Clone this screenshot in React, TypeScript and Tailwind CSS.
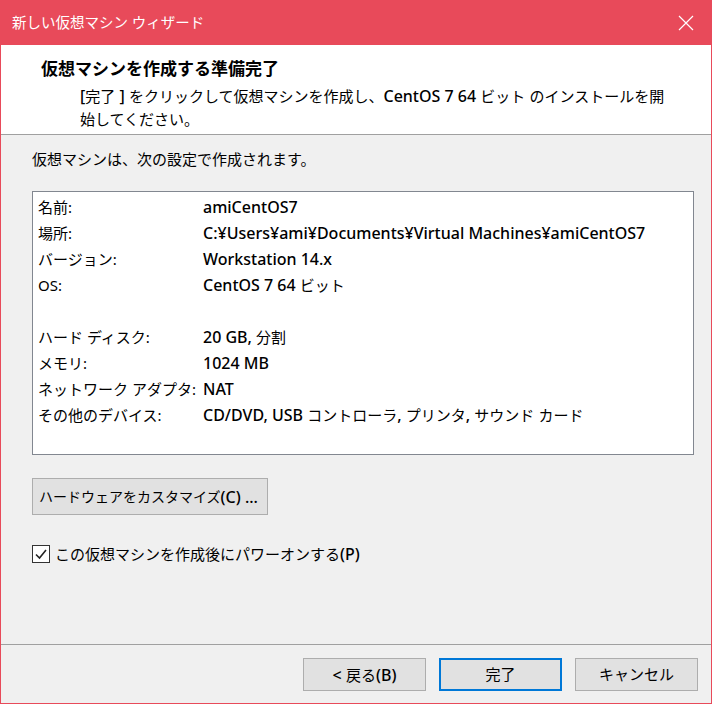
import React from "react";

const rows: [string, string][] = [
  ["名前:", "amiCentOS7"],
  ["場所:", "C:¥Users¥ami¥Documents¥Virtual Machines¥amiCentOS7"],
  ["バージョン:", "Workstation 14.x"],
  ["OS:", "CentOS 7 64 ビット"],
  ["", ""],
  ["ハード ディスク:", "20 GB, 分割"],
  ["メモリ:", "1024 MB"],
  ["ネットワーク アダプタ:", "NAT"],
  ["その他のデバイス:", "CD/DVD, USB コントローラ, プリンタ, サウンド カード"],
];

function M({ text }: { text: string }) {
  const parts = text.split(/([\u3000-\u30ff\u4e00-\u9fff\uff00-\uffef]+)/);
  return (
    <>
      {parts.map((p, i) =>
        p === "" ? null : /[\u3000-\u30ff\u4e00-\u9fff\uff00-\uffef]/.test(p) ? (
          <span key={i}>{p}</span>
        ) : (
          <span key={i} className="text-[16px] font-medium">
            {p}
          </span>
        )
      )}
    </>
  );
}

export default function App() {
  return (
    <div
      className="w-[712px] h-[704px] border border-[#e84a5a] bg-[#f0f0f0] flex flex-col text-black"
      style={{ fontFamily: '"Noto Sans", "Noto Sans CJK JP", sans-serif' }}
    >
      {/* Title bar */}
      <div className="h-[44px] bg-[#e84a5a] flex items-center justify-between pl-[11px] pr-[17px] shrink-0">
        <span className="text-white text-[14.5px]">新しい仮想マシン ウィザード</span>
        <svg width="16" height="16" viewBox="0 0 16 16">
          <path d="M1 1 L15 15 M15 1 L1 15" stroke="white" strokeWidth="1.2" fill="none" />
        </svg>
      </div>

      {/* Header */}
      <div className="h-[90px] bg-white border-b border-[#a0a0a0] shrink-0 pl-[40px] pt-[12px]">
        <div className="text-[17px] font-bold leading-[24px]">仮想マシンを作成する準備完了</div>
        <div className="pl-[39px] text-[15px] leading-[23px] mt-[4px] whitespace-nowrap">
          <M text="[完了 ] をクリックして仮想マシンを作成し、CentOS 7 64 ビット のインストールを開" />
          <br />
          始してください。
        </div>
      </div>

      {/* Body */}
      <div className="flex-1 pl-[31px] pt-[12px]">
        <div className="text-[15px] leading-[24px]">仮想マシンは、次の設定で作成されます。</div>
        <div className="mt-[20px] w-[662px] h-[264px] bg-white border border-[#828790] pt-[2px] pl-[5px]">
          {rows.map(([k, v], i) => (
            <div key={i} className="flex h-[26px] items-center text-[15px] whitespace-nowrap">
              <div className="w-[165px] shrink-0">{k}</div>
              <div>
                <M text={v} />
              </div>
            </div>
          ))}
        </div>
        <button className="mt-[23px] w-[236px] h-[37px] bg-[#e1e1e1] border border-[#adadad] text-[14px] flex items-center pl-[6px] whitespace-nowrap">
          <M text="ハードウェアをカスタマイズ(C) ..." />
        </button>
        <div className="mt-[27px] flex items-center gap-[5px]">
          <div className="w-[18px] h-[18px] border border-[#333333] bg-white flex items-center justify-center">
            <svg width="14" height="14" viewBox="0 0 14 14">
              <path d="M2 7.5 L5.5 11 L12 3" stroke="#222" strokeWidth="1.6" fill="none" />
            </svg>
          </div>
          <span className="text-[15px] whitespace-nowrap">
            <M text="この仮想マシンを作成後にパワーオンする(P)" />
          </span>
        </div>
      </div>

      {/* Footer */}
      <div className="h-[59px] border-t border-[#a0a0a0] shrink-0 flex justify-end gap-[13px] pr-[13px] pt-[13px]">
        <button className="w-[123px] h-[33px] bg-[#e1e1e1] border border-[#adadad] text-[15px] whitespace-nowrap">
          <M text="<  " />
          戻る
          <M text="(B)" />
        </button>
        <button className="w-[123px] h-[33px] bg-[#e1e1e1] border-2 border-[#0078d7] text-[15px]">
          完了
        </button>
        <button className="w-[123px] h-[33px] bg-[#e1e1e1] border border-[#adadad] text-[15px]">
          キャンセル
        </button>
      </div>
    </div>
  );
}
